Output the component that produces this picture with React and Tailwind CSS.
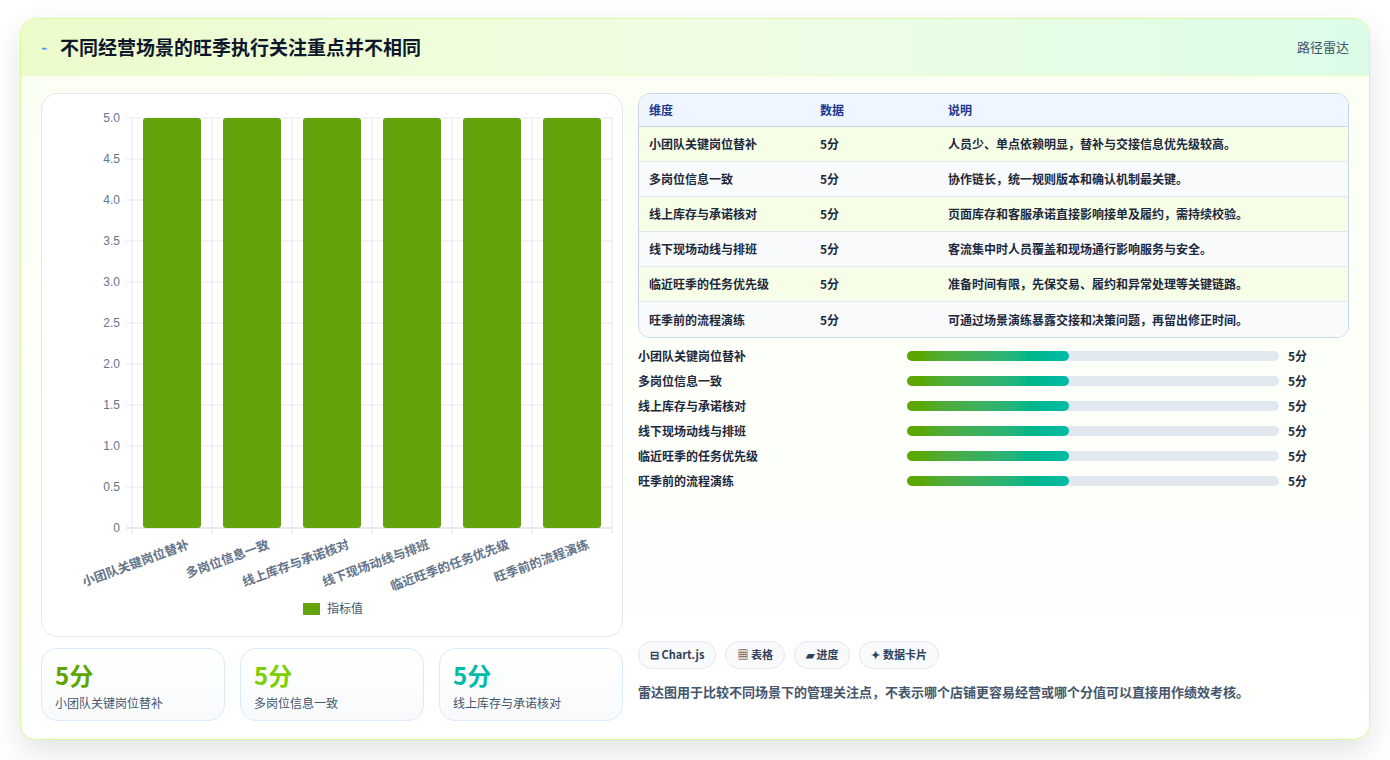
const rows = [
  ["小团队关键岗位替补", "人员少、单点依赖明显，替补与交接信息优先级较高。"],
  ["多岗位信息一致", "协作链长，统一规则版本和确认机制最关键。"],
  ["线上库存与承诺核对", "页面库存和客服承诺直接影响接单及履约，需持续校验。"],
  ["线下现场动线与排班", "客流集中时人员覆盖和现场通行影响服务与安全。"],
  ["临近旺季的任务优先级", "准备时间有限，先保交易、履约和异常处理等关键链路。"],
  ["旺季前的流程演练", "可通过场景演练暴露交接和决策问题，再留出修正时间。"],
];

const font = { fontFamily: '"Noto Sans CJK SC", "Noto Sans", sans-serif' };

function Chart() {
  const x0 = 90, x1 = 570, y0 = 24, y1 = 434;
  const ticks = [5, 4.5, 4, 3.5, 3, 2.5, 2, 1.5, 1, 0.5, 0];
  const step = (x1 - x0) / 6;
  return (
    <svg width="582" height="544" className="block">
      {ticks.map((t, i) => {
        const y = y0 + ((y1 - y0) * i) / 10;
        return (
          <g key={t}>
            <line x1={x0 - 6} x2={x1} y1={y} y2={y} stroke={t === 0 ? "#cbd5e1" : "#e5e7eb"} />
            <text x={x0 - 12} y={y + 4} textAnchor="end" fontSize="12" fill="#64748b" fontFamily="Liberation Sans, sans-serif">
              {t === 0 ? "0" : t.toFixed(1)}
            </text>
          </g>
        );
      })}
      {Array.from({ length: 7 }).map((_, i) => (
        <line key={i} x1={x0 + step * i} x2={x0 + step * i} y1={y0} y2={y1 + 6} stroke="#e5e7eb" />
      ))}
      {rows.map(([n], i) => (
        <g key={n}>
          <rect x={x0 + step * i + 11} y={y0} width={58} height={y1 - y0} rx="3" fill="#65a30d" />
          <text
            transform={`translate(${x0 + step * i + step / 2 + 18},${y1 + 20}) rotate(-20)`}
            textAnchor="end"
            fontSize="12.5"
            fontWeight="600"
            fill="#64748b"
            style={font}
          >
            {n}
          </text>
        </g>
      ))}
      <rect x="261" y="509" width="17" height="12" fill="#65a30d" />
      <text x="285" y="519" fontSize="12" fill="#475569" style={font}>指标值</text>
    </svg>
  );
}

export default function App() {
  return (
    <div className="min-h-screen bg-white px-5 pt-[18px]" style={font}>
      <div className="h-[722px] rounded-2xl border border-lime-200 bg-gradient-to-b from-[#fbfff3] to-white shadow-[0_12px_30px_rgba(15,23,42,0.12)] overflow-hidden flex flex-col">
        <div className="h-[57px] flex items-center justify-between px-5 bg-gradient-to-r from-[#ecfccb] via-[#f0fde4] to-[#dcfce7] border-b border-lime-100">
          <div className="flex items-center gap-3">
            <span className="text-blue-500 text-[11px]">⌁</span>
            <h1 className="text-[19px] font-bold text-slate-900">不同经营场景的旺季执行关注重点并不相同</h1>
          </div>
          <span className="text-[13px] text-slate-600">路径雷达</span>
        </div>
        <div className="flex gap-[15px] px-5 pt-[17px]">
          <div className="w-[582px] flex flex-col gap-[11px]">
            <div className="h-[544px] rounded-2xl border border-slate-200 bg-white">
              <Chart />
            </div>
            <div className="grid grid-cols-3 gap-[15px]">
              {[
                ["text-lime-600", rows[0][0]],
                ["text-lime-500", rows[1][0]],
                ["text-teal-500", rows[2][0]],
              ].map(([c, n]) => (
                <div key={n} className="h-[73px] rounded-2xl border border-blue-100 bg-gradient-to-b from-white to-slate-50 px-[13px] pt-[10px]">
                  <div className={`text-[24px] font-bold leading-8 ${c}`}>5分</div>
                  <div className="text-[12px] text-slate-600 mt-[3px]">{n}</div>
                </div>
              ))}
            </div>
          </div>
          <div className="flex-1 flex flex-col">
            <div className="rounded-xl border border-slate-300 overflow-hidden text-[12px]">
              <div className="h-[33px] flex items-center bg-[#eff6ff] border-b border-slate-300 text-blue-900 font-semibold px-[10px]">
                <div className="w-[171px]">维度</div>
                <div className="w-[128px]">数据</div>
                <div>说明</div>
              </div>
              {rows.map(([n, d], i) => (
                <div key={n} className={`h-[35px] flex items-center px-[10px] text-slate-800 font-semibold ${i < 5 ? "border-b border-slate-200" : ""} ${i % 2 ? "bg-slate-50" : "bg-[#f7fee7]"}`}>
                  <div className="w-[171px]">{n}</div>
                  <div className="w-[128px]">5分</div>
                  <div>{d}</div>
                </div>
              ))}
            </div>
            <div className="mt-[9px] flex flex-col gap-[7px]">
              {rows.map(([n]) => (
                <div key={n} className="h-[18px] flex items-center text-[12px] font-semibold text-slate-800">
                  <div className="w-[269px]">{n}</div>
                  <div className="w-[372px] h-[10px] rounded-full bg-slate-200">
                    <div className="h-full w-[43.5%] rounded-full bg-gradient-to-r from-lime-600 to-teal-500" />
                  </div>
                  <div className="ml-[9px]">5分</div>
                </div>
              ))}
            </div>
            <div className="mt-auto pb-[20px]">
              <div className="flex gap-[9px]">
                {["⊟ Chart.js", "▦ 表格", "▰ 进度", "✦ 数据卡片"].map((t) => (
                  <span key={t} className="h-[28px] px-[11px] flex items-center rounded-full border border-slate-200 bg-slate-50 text-[11px] font-semibold text-slate-700">
                    {t}
                  </span>
                ))}
              </div>
              <p className="mt-[13px] text-[13px] font-semibold text-slate-600">
                雷达图用于比较不同场景下的管理关注点，不表示哪个店铺更容易经营或哪个分值可以直接用作绩效考核。
              </p>
            </div>
          </div>
        </div>
      </div>
    </div>
  );
}
